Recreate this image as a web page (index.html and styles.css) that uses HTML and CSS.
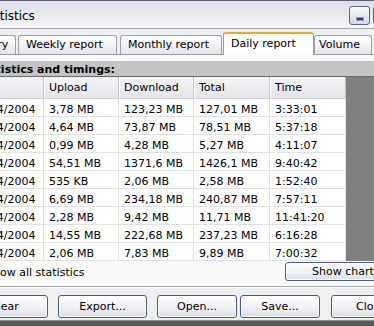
FILE: index.html
```html
<!DOCTYPE html>
<html>
<head>
<meta charset="utf-8">
<link rel="stylesheet" href="styles.css">
</head>
<body>
<div class="win">
  <div class="titlebar">
    <span class="title">Statistics</span>
    <div class="tbtns">
      <div class="tb"><span class="dash"></span></div>
      <div class="tb"></div>
    </div>
  </div>
  <div class="tabs">
    <div class="tab t0">Summary</div>
    <div class="tab t1">Weekly report</div>
    <div class="tab t2">Monthly report</div>
    <div class="tab sel t3">Daily report</div>
    <div class="tab t4">Volume</div>
    <div class="tab t5">Limits</div>
  </div>
  <div class="panel">
    <div class="band"><span>Statistics and timings:</span></div>
    <div class="list">
      <div class="grid">
        <div class="row head"><div>Date</div><div>Upload</div><div>Download</div><div>Total</div><div>Time</div></div>
        <div class="row"><div>01/04/2004</div><div>3,78 MB</div><div>123,23 MB</div><div>127,01 MB</div><div>3:33:01</div></div>
        <div class="row"><div>02/04/2004</div><div>4,64 MB</div><div>73,87 MB</div><div>78,51 MB</div><div>5:37:18</div></div>
        <div class="row"><div>03/04/2004</div><div>0,99 MB</div><div>4,28 MB</div><div>5,27 MB</div><div>4:11:07</div></div>
        <div class="row"><div>04/04/2004</div><div>54,51 MB</div><div>1371,6 MB</div><div>1426,1 MB</div><div>9:40:42</div></div>
        <div class="row"><div>05/04/2004</div><div>535 KB</div><div>2,06 MB</div><div>2,58 MB</div><div>1:52:40</div></div>
        <div class="row"><div>06/04/2004</div><div>6,69 MB</div><div>234,18 MB</div><div>240,87 MB</div><div>7:57:11</div></div>
        <div class="row"><div>07/04/2004</div><div>2,28 MB</div><div>9,42 MB</div><div>11,71 MB</div><div>11:41:20</div></div>
        <div class="row"><div>08/04/2004</div><div>14,55 MB</div><div>222,68 MB</div><div>237,23 MB</div><div>6:16:28</div></div>
        <div class="row"><div>09/04/2004</div><div>2,06 MB</div><div>7,83 MB</div><div>9,89 MB</div><div>7:00:32</div></div>
      </div>
    </div>
    <div class="under">
      <span class="check">Show all statistics</span>
      <div class="btn chart">Show chart</div>
    </div>
  </div>
  <div class="buttons">
    <div class="btn b-clear">Clear</div>
    <div class="btn b-export">Export...</div>
    <div class="btn b-open">Open...</div>
    <div class="btn b-save">Save...</div>
    <div class="btn b-close">Close</div>
  </div>
  <div class="edge"></div>
</div>
</body>
</html>
```
FILE: styles.css
```css
* { box-sizing: border-box; }
body {
  margin: 0;
  font-family: "DejaVu Sans", Verdana, sans-serif;
  font-size: 11px;
  color: #000;
  background: #efefef;
}
.win {
  width: 374px;
  height: 326px;
  overflow: hidden;
  background: #efefef;
  display: flex;
  flex-direction: column;
}
.titlebar {
  height: 29px;
  flex: none;
  border-top: 1px solid #5d6075;
  border-bottom: 1px solid #a6a6b0;
  background: linear-gradient(#dcdde6, #f6f6f9);
  display: flex;
  align-items: center;
  justify-content: space-between;
}
.title {
  font-size: 12px;
  margin-left: -20px;
  padding-top: 3px;
  white-space: nowrap;
}
.tbtns {
  display: flex;
  gap: 3px;
  margin-right: -20px;
  margin-top: 2px;
}
.tb {
  width: 21px;
  height: 19px;
  border: 1px solid #5a6486;
  border-radius: 3px;
  background: linear-gradient(#fbfbfd, #d6d8e2);
  display: flex;
  justify-content: center;
  align-items: flex-end;
  padding-bottom: 3px;
}
.dash {
  width: 8px;
  height: 4px;
  background: #2b3a7a;
  border: 1px solid #8d96bc;
}
.tabs {
  flex: none;
  height: 22px;
  margin-top: 3px;
  display: flex;
  align-items: flex-end;
  position: relative;
  z-index: 1;
}
.tab {
  flex: none;
  height: 19px;
  border: 1px solid #9aa0b0;
  border-bottom: 0;
  border-radius: 3px 3px 0 0;
  background: linear-gradient(#ffffff, #e4e4ea);
  line-height: 18px;
  padding-left: 7px;
  white-space: nowrap;
  overflow: hidden;
}
.tab.sel {
  height: 23px;
  margin-bottom: -1px;
  background: #ffffff;
  border-top: 2px solid #f0a53a;
  line-height: 20px;
}
.t0 { margin-left: -53px; width: 69px; }
.t1 { margin-left: 2px; width: 99px; }
.t2 { margin-left: 3px; width: 102px; }
.t3 { margin-left: 1px; width: 91px; }
.t4 { margin-left: 0; width: 58px; padding-left: 4px; }
.t5 { margin-left: 2px; width: 60px; }
.panel {
  flex: none;
  border-top: 1px solid #9aa0b0;
  border-bottom: 1px solid #a8a8b0;
  box-shadow: 0 1px 0 #ffffff;
  background: #fafafa;
  padding-top: 6px;
}
.band {
  height: 16px;
  background: #c4c4c4;
  border-bottom: 1px solid #6a6a6a;
  font-weight: bold;
  line-height: 17px;
  white-space: nowrap;
  overflow: hidden;
}
.band span { margin-left: -25px; }
.list {
  height: 184px;
  background: #808080;
  overflow: hidden;
}
.grid {
  width: 379px;
  margin-left: -33px;
  background: #ffffff;
}
.row {
  display: grid;
  grid-template-columns: 77px 75px 75px 76px 76px;
  height: 18px;
}
.row > div {
  border-right: 1px solid #e2e2e2;
  border-bottom: 1px solid #e2e2e2;
  padding-left: 5px;
  padding-top: 3px;
  line-height: 16px;
  white-space: nowrap;
  overflow: hidden;
}
.row.head {
  height: 22px;
  background: linear-gradient(#f4f4f6, #e4e4e8);
}
.row.head > div {
  border-right: 1px solid #c4c4cc;
  border-bottom: 1px solid #d0d0d6;
  box-shadow: inset 1px 0 0 #ffffff;
  padding-top: 3px;
}
.under {
  height: 25px;
  display: flex;
  justify-content: space-between;
  align-items: flex-start;
}
.check {
  margin-left: -14px;
  padding-top: 5px;
  white-space: nowrap;
}
.btn {
  flex: none;
  border: 1px solid #4d5c82;
  border-radius: 3px;
  background: linear-gradient(#ffffff 0%, #f2f2f6 50%, #dedee6 100%);
  box-shadow: inset 0 0 0 1px #ffffff;
  text-align: center;
  white-space: nowrap;
}
.chart {
  width: 116px;
  height: 19px;
  margin-top: 1px;
  margin-right: -27px;
  line-height: 17px;
}
.buttons {
  flex: none;
  height: 33px;
  padding-top: 8px;
  display: flex;
  align-items: flex-start;
}
.buttons .btn {
  height: 23px;
  line-height: 21px;
}
.b-clear { margin-left: -39px; width: 87px; }
.b-export { margin-left: 10px; width: 89px; }
.b-open { margin-left: 10px; width: 80px; }
.b-save { margin-left: 3px; width: 80px; }
.b-close { margin-left: 11px; width: 80px; }
.edge {
  flex: 1;
  border-top: 1px solid #8a8a8a;
  background: #5a5a5a;
}
```
